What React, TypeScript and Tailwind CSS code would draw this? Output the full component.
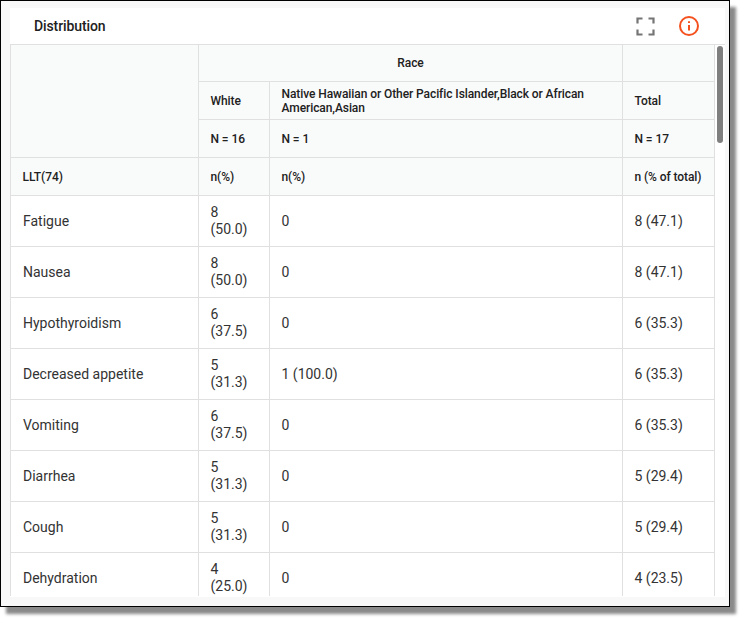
const rows = [
  ['Fatigue', '8 (50.0)', '0', '8 (47.1)'],
  ['Nausea', '8 (50.0)', '0', '8 (47.1)'],
  ['Hypothyroidism', '6 (37.5)', '0', '6 (35.3)'],
  ['Decreased appetite', '5 (31.3)', '1 (100.0)', '6 (35.3)'],
  ['Vomiting', '6 (37.5)', '0', '6 (35.3)'],
  ['Diarrhea', '5 (31.3)', '0', '5 (29.4)'],
  ['Cough', '5 (31.3)', '0', '5 (29.4)'],
  ['Dehydration', '4 (25.0)', '0', '4 (23.5)'],
];

const head = 'border-r border-b border-[#e0e0e0] bg-[#f9fafa] align-middle text-[12px] leading-[14px] font-medium tracking-[-0.08px] text-[#212121]';
const headLeft = `${head} pr-[8px] pl-[11.5px] text-left`;
const cellBase = 'h-[51px] border-r border-b border-[#e0e0e0] bg-white py-0 pr-3 text-left align-middle text-[14px] leading-[17px] font-normal text-[#333333]';
const cell = `${cellBase} pl-[11.5px]`;
const labelCell = `${cellBase} pl-3`;

export default function App() {
  return (
    <div className="h-[619px] w-[742px] bg-white font-['Roboto',sans-serif]">
      <div className="h-[607px] w-[730px] border border-black bg-[#f8f8f8] pt-[7px] pl-[9px] shadow-[6px_7px_3px_#8a8a8a]">
        <div className="h-[589px] w-[715px] overflow-hidden bg-white">
          <div className="flex h-[37px] items-center justify-between border-b border-[#e0e0e0] pr-[26px] pl-[24px]">
            <span className="text-[14px] font-medium tracking-[-0.1px] text-[#212121]">Distribution</span>
            <div className="flex items-center gap-[24px]">
              <svg width="19" height="19" viewBox="0 0 19 19" fill="none" stroke="#757575" strokeWidth="2.2">
                <path d="M1.5 6.5V1.5h5M12.5 1.5h5v5M17.5 12.5v5h-5M6.5 17.5h-5v-5" />
              </svg>
              <svg width="20" height="20" viewBox="0 0 20 20" fill="none" stroke="#f4511e" strokeWidth="2">
                <circle cx="10" cy="10" r="9" />
                <path d="M10 9v5.5M10 5.2v1.8" />
              </svg>
            </div>
          </div>
          <div className="relative h-[551px] overflow-hidden">
            <table className="w-[705px] table-fixed border-separate border-spacing-0 border-l border-[#e0e0e0]">
              <colgroup>
                <col className="w-[188px]" />
                <col className="w-[71px]" />
                <col className="w-[353px]" />
                <col className="w-[92px]" />
              </colgroup>
              <thead>
                <tr className="h-[37px]">
                  <th rowSpan={3} className={head} />
                  <th colSpan={2} className={`${head} text-center`}>Race</th>
                  <th className={head} />
                </tr>
                <tr className="h-[38px]">
                  <th className={headLeft}>White</th>
                  <th className={headLeft}>Native Hawaiian or Other Pacific Islander,Black or African American,Asian</th>
                  <th className={headLeft}>Total</th>
                </tr>
                <tr className="h-[38px]">
                  <th className={headLeft}>N = 16</th>
                  <th className={headLeft}>N = 1</th>
                  <th className={headLeft}>N = 17</th>
                </tr>
                <tr className="h-[38px]">
                  <th className={headLeft}>LLT(74)</th>
                  <th className={headLeft}>n(%)</th>
                  <th className={headLeft}>n(%)</th>
                  <th className={`${headLeft} whitespace-nowrap`}>n (% of total)</th>
                </tr>
              </thead>
              <tbody>
                {rows.map((r) => (
                  <tr key={r[0]}>
                    <td className={labelCell}>{r[0]}</td>
                    <td className={cell}>{r[1]}</td>
                    <td className={cell}>{r[2]}</td>
                    <td className={cell}>{r[3]}</td>
                  </tr>
                ))}
              </tbody>
            </table>
            <div className="absolute top-[1px] right-[2px] h-[97px] w-[6px] rounded-full bg-[#7f7f7f]" />
          </div>
        </div>
      </div>
    </div>
  );
}
